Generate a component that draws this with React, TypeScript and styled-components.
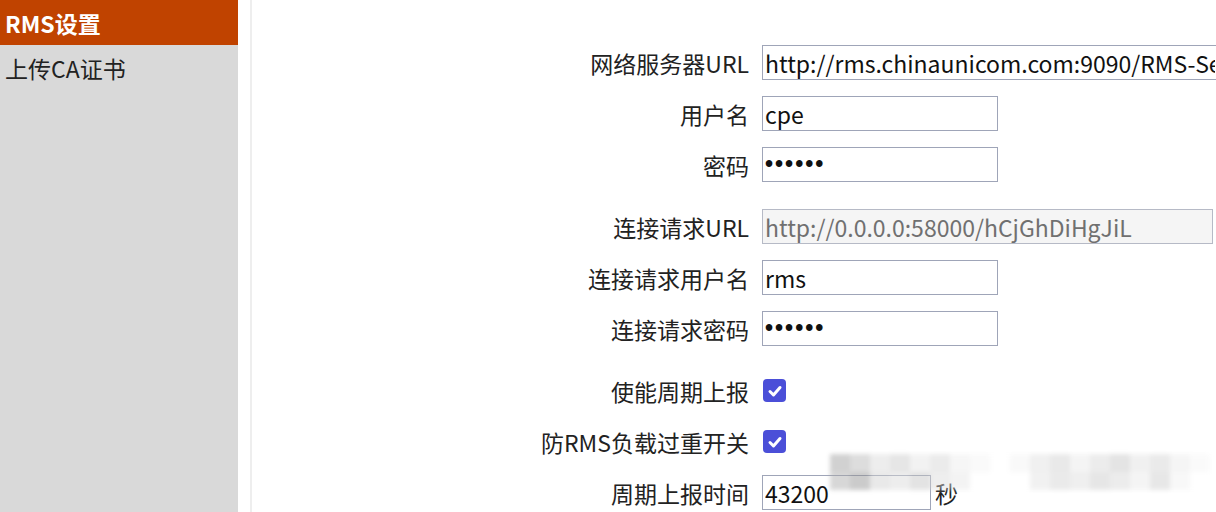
import React, { FC } from "react";
import styled, { createGlobalStyle } from "styled-components";

const GlobalStyle = createGlobalStyle`
  html, body {
    margin: 0;
    padding: 0;
    background: #ffffff;
    overflow: hidden;
  }
  body {
    font-family: "Noto Sans CJK SC", "Noto Sans", sans-serif;
    color: #1e1e1e;
  }
`;

const Page = styled.div`
  display: flex;
  width: 1216px;
  height: 512px;
  position: relative;
  overflow: hidden;
`;

const Sidebar = styled.nav`
  width: 238px;
  flex-shrink: 0;
  background: #d9d9d9;
  display: flex;
  flex-direction: column;
`;

const NavItem = styled.div<{ $active?: boolean }>`
  height: 45px;
  display: flex;
  align-items: center;
  padding-left: 5px;
  font-size: 23px;
  background: ${(p) => (p.$active ? "#c04300" : "transparent")};
  color: ${(p) => (p.$active ? "#ffffff" : "#222222")};
  font-weight: ${(p) => (p.$active ? 700 : 400)};
`;

const Divider = styled.div`
  width: 2px;
  margin-left: 12px;
  background: #eeeeee;
  flex-shrink: 0;
`;

const Content = styled.main`
  flex: 1;
  padding-top: 45px;
  display: flex;
  flex-direction: column;
  gap: 16px;
`;

const Row = styled.div<{ $spaced?: boolean }>`
  display: grid;
  grid-template-columns: 497px auto;
  column-gap: 13px;
  height: 35px;
  align-items: center;
  margin-top: ${(p) => (p.$spaced ? "11px" : "0")};
`;

const Label = styled.label`
  text-align: right;
  font-size: 23px;
  white-space: nowrap;
  color: #222222;
`;

const Field = styled.div`
  display: flex;
  align-items: center;
  gap: 4px;
`;

const Input = styled.input<{ $w: number }>`
  box-sizing: border-box;
  width: ${(p) => p.$w}px;
  height: 35px;
  border: 1px solid #9fa5b8;
  padding: 0 2px;
  font-family: "Noto Sans CJK SC", "Noto Sans", sans-serif;
  font-size: 23px;
  color: #111111;
  background: #ffffff;
  outline: none;

  &[type="password"] {
    font-family: "Liberation Sans", Arial, sans-serif;
    font-size: 23px;
    letter-spacing: 2px;
    font-weight: 700;
  }

  &:disabled {
    background: #f5f5f5;
    color: #707070;
    border-color: #b6bac6;
  }
`;

const CheckBox = styled.span`
  display: inline-flex;
  align-items: center;
  justify-content: center;
  width: 23px;
  height: 23px;
  margin-left: 1px;
  border-radius: 4px;
  background: #4b4fd8;
`;

const Unit = styled.span`
  font-size: 23px;
  color: #222222;
`;

const Watermark = styled.div`
  position: absolute;
  left: 830px;
  top: 454px;
  width: 380px;
  height: 36px;
  display: grid;
  grid-template-columns: repeat(19, 1fr);
  grid-template-rows: repeat(2, 1fr);
  filter: blur(2px);
  opacity: 0.45;
`;

const Cell = styled.div<{ $shade: string }>`
  background: ${(p) => p.$shade};
`;

const mosaic = [
  "#9a9a9a", "#b4b4b4", "#d8d8d8", "#c8c8c8", "#e4e4e4", "#d4d4d4", "#ececec", "#f4f4f4", "#ffffff", "#f2f2f2",
  "#dedede", "#cfcfcf", "#e8e8e8", "#d6d6d6", "#c4c4c4", "#e0e0e0", "#d2d2d2", "#eaeaea", "#f6f6f6",
  "#a8a8a8", "#8e8e8e", "#cfcfcf", "#d9d9d9", "#c2c2c2", "#dadada", "#e6e6e6", "#ffffff", "#ffffff", "#ffffff",
  "#e2e2e2", "#d2d2d2", "#dcdcdc", "#cacaca", "#d6d6d6", "#e8e8e8", "#cccccc", "#f0f0f0", "#ffffff",
];

const Check: FC = () => (
  <svg width="16" height="16" viewBox="0 0 16 16">
    <path d="M3 8.5 L6.5 12 L13 4.5" fill="none" stroke="#ffffff" strokeWidth="3" strokeLinecap="round" strokeLinejoin="round" />
  </svg>
);

const App: FC = () => {
  return (
    <>
      <GlobalStyle />
      <Page>
        <Sidebar>
          <NavItem $active>RMS设置</NavItem>
          <NavItem>上传CA证书</NavItem>
        </Sidebar>
        <Divider />
        <Content>
          <Row>
            <Label>网络服务器URL</Label>
            <Field>
              <Input $w={456} defaultValue="http://rms.chinaunicom.com:9090/RMS-Server/RMS" />
            </Field>
          </Row>
          <Row>
            <Label>用户名</Label>
            <Field>
              <Input $w={236} defaultValue="cpe" />
            </Field>
          </Row>
          <Row>
            <Label>密码</Label>
            <Field>
              <Input $w={236} type="password" defaultValue="123456" />
            </Field>
          </Row>

          <Row $spaced>
            <Label>连接请求URL</Label>
            <Field>
              <Input $w={451} disabled defaultValue="http://0.0.0.0:58000/hCjGhDiHgJiL" />
            </Field>
          </Row>
          <Row>
            <Label>连接请求用户名</Label>
            <Field>
              <Input $w={236} defaultValue="rms" />
            </Field>
          </Row>
          <Row>
            <Label>连接请求密码</Label>
            <Field>
              <Input $w={236} type="password" defaultValue="123456" />
            </Field>
          </Row>

          <Row $spaced>
            <Label>使能周期上报</Label>
            <Field>
              <CheckBox>
                <Check />
              </CheckBox>
            </Field>
          </Row>
          <Row>
            <Label>防RMS负载过重开关</Label>
            <Field>
              <CheckBox>
                <Check />
              </CheckBox>
            </Field>
          </Row>
          <Row>
            <Label>周期上报时间</Label>
            <Field>
              <Input $w={169} defaultValue="43200" />
              <Unit>秒</Unit>
            </Field>
          </Row>
        </Content>
        <Watermark>
          {mosaic.map((shade, i) => (
            <Cell key={i} $shade={shade} />
          ))}
        </Watermark>
      </Page>
    </>
  );
};

export default App;
